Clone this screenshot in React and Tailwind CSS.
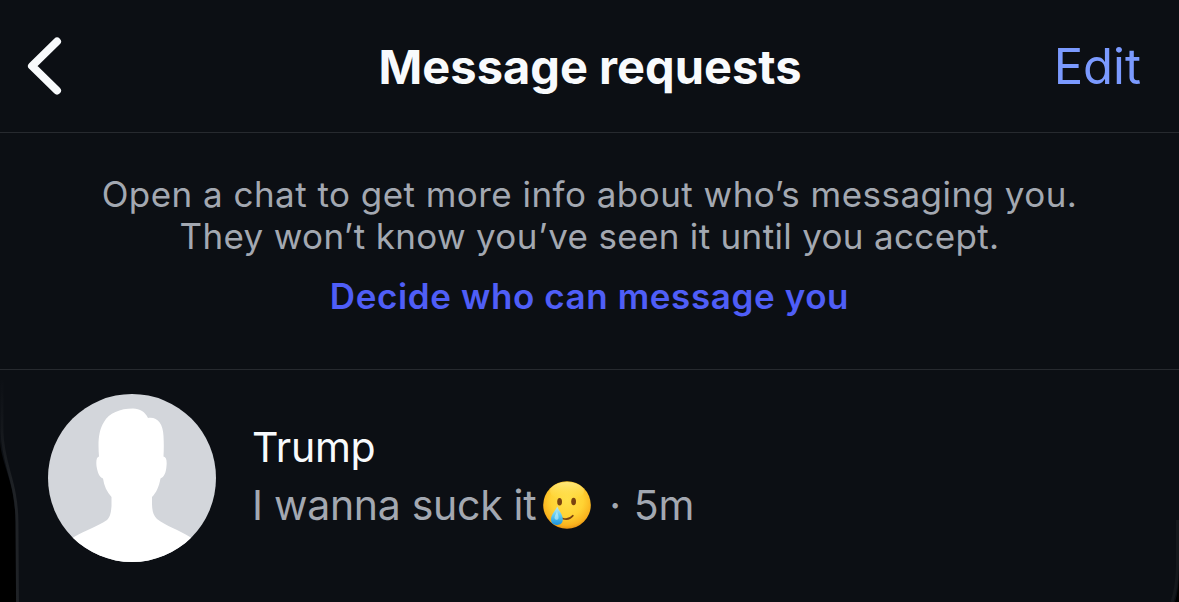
function BackIcon() {
  return (
    <svg viewBox="0 0 36 60" className="h-[60px] w-9" fill="none">
      <path
        d="M30 5.5 L5 30 L30 54.500"
        stroke="#f8fafc"
        strokeWidth="8"
        strokeLinecap="round"
        strokeLinejoin="round"
      />
    </svg>
  );
}

function Avatar() {
  return (
    <div className="size-[168px] shrink-0 overflow-hidden rounded-full bg-[#d3d6db]">
      <svg viewBox="0 0 168 168" className="size-full">
        <path
          fill="#fff"
          d="M85 14.5 C92 14.5 97 18 100 24 C109 22.500 115 29 115.500 42 C116 50 115.800 57 115.500 62.500 C118.500 63 119 67 118.500 72 C118 79 116 83 112.500 84.500 C111 93 108 99 104 103 L104 110 C104.300 117 105 121 109 125 C118 132 131 136 142 143 L168 168 L0 168 L26 143 C38 136 50 132 59 126 C62 123 63 119 63.500 112 L63.500 103 C59 98 56 92 55 84.500 C51 83 49.500 78 48.500 72 C48 67 48.500 63 51 62.500 C50 50 50 37 56 28 C61 19 72 14.500 85 14.500 Z"
        />
      </svg>
    </div>
  );
}

function TearSmile() {
  return (
    <svg viewBox="0 0 48 48" className="size-12 shrink-0">
      <defs>
        <radialGradient id="face" cx="0.5" cy="0.4" r="0.62">
          <stop offset="0" stopColor="#ffe04a" />
          <stop offset="0.55" stopColor="#ffd233" />
          <stop offset="0.85" stopColor="#fab31e" />
          <stop offset="1" stopColor="#e58b10" />
        </radialGradient>
        <linearGradient id="shine" x1="0" y1="0" x2="0" y2="1">
          <stop offset="0" stopColor="#fff3a0" stopOpacity="0.7" />
          <stop offset="1" stopColor="#ffe449" stopOpacity="0" />
        </linearGradient>
        <linearGradient id="tear" x1="0" y1="0" x2="0" y2="1">
          <stop offset="0" stopColor="#c4eef5" />
          <stop offset="0.5" stopColor="#5cc8f0" />
          <stop offset="1" stopColor="#1a91dc" />
        </linearGradient>
      </defs>
      <circle cx="24" cy="24" r="23.8" fill="url(#face)" />
      <ellipse cx="24" cy="10" rx="17" ry="9" fill="url(#shine)" />
      <ellipse cx="16.600" cy="20.800" rx="2.400" ry="3.800" fill="#7a4310" />
      <ellipse cx="30.600" cy="20.500" rx="2.400" ry="3.800" fill="#7a4310" />
      <path
        d="M19.500 37.500 Q26 39.500 29.800 34.800"
        fill="none"
        stroke="#7a4310"
        strokeWidth="1.800"
        strokeLinecap="round"
      />
      <path
        d="M14.200 25.500 C15.500 29 19.800 33.500 19.800 38.300 C19.800 42 17.500 44 14 44 C10.200 44 8 42 8 38.300 C8 33.500 13 29 14.200 25.500 Z"
        fill="url(#tear)"
      />
      <path
        d="M14 30 C14.500 33 16 35 15.500 37.500 C14.500 39.500 12 39 11.500 37 C11.500 34.500 13.500 32.500 14 30 Z"
        fill="#d5f5fb"
        opacity="0.55"
      />
    </svg>
  );
}

// Curved bezel showing at the lower corners of the screen
function ScreenEdges() {
  return (
    <svg
      viewBox="0 0 1179 232"
      className="pointer-events-none absolute bottom-0 left-0 h-[232px] w-[1179px]"
      fill="none"
    >
      <defs>
        <linearGradient
          id="bezel"
          gradientUnits="userSpaceOnUse"
          x1="0"
          y1="5"
          x2="0"
          y2="120"
        >
          <stop offset="0" stopColor="#1f2226" stopOpacity="0" />
          <stop offset="1" stopColor="#1f2226" />
        </linearGradient>
      </defs>
      <path
        d="M0 72 C2 96 15 112 15.500 152 L16 232 L0 232 Z"
        fill="#000"
      />
      <path
        d="M2 10 L2 62 C3 96 16.500 110 17 152 L17.500 232"
        stroke="url(#bezel)"
        strokeWidth="2.800"
      />
      <path
        d="M1177.500 150 L1177.500 195 Q1177 218 1172 232"
        stroke="#15181c"
        strokeWidth="3"
      />
      <path d="M1179 200 Q1179 220 1175 232 L1179 232 Z" fill="#000" />
    </svg>
  );
}

function Header() {
  return (
    <header className="grid h-[133px] grid-cols-[1fr_auto_1fr] items-center border-b border-[#272a2f] pr-[38px] pl-[27px]">
      <button aria-label="Back" className="justify-self-start">
        <BackIcon />
      </button>
      <h1 className="pl-[12px] text-[47px] leading-none font-bold text-[#f8fafc]">
        Message requests
      </h1>
      <button className="justify-self-end text-[49px] leading-none text-[#7b9aff]">
        Edit
      </button>
    </header>
  );
}

function RequestInfo() {
  return (
    <section className="flex h-[237px] flex-col items-center border-b border-[#272a2f] pt-10 whitespace-nowrap">
      <p className="text-center text-[35px] leading-[42px] text-[#a3a8b1]">
        <span className="block tracking-[0.46px]">
          Open a chat to get more info about who’s messaging you.
        </span>
        <span className="block tracking-[0.33px]">
          They won’t know you’ve seen it until you accept.
        </span>
      </p>
      <button className="mt-[17px] text-[35px] leading-[44px] font-semibold tracking-[0.6px] text-[#4f5ef7]">
        Decide who can message you
      </button>
    </section>
  );
}

function RequestRow({ name, message, time }) {
  return (
    <div className="flex items-start pt-6 pl-12">
      <Avatar />
      <div className="ml-9 pt-6 text-[41px] leading-[58px] tracking-[-0.3px] whitespace-nowrap">
        <div className="text-[#f8fafc]">{name}</div>
        <div className="flex items-center text-[#a3a8b1]">
          <span>{message}</span>
          <span className="ml-[7px]">
            <TearSmile />
          </span>
          <span className="ml-[18px]">·</span>
          <span className="ml-[13px]">{time}</span>
        </div>
      </div>
    </div>
  );
}

export default function App() {
  return (
    <div className="relative h-[602px] w-[1179px] overflow-hidden bg-[#0c0f14] font-[Inter,sans-serif]">
      <Header />
      <RequestInfo />
      <RequestRow name="Trump" message="I wanna suck it" time="5m" />
      <ScreenEdges />
    </div>
  );
}
